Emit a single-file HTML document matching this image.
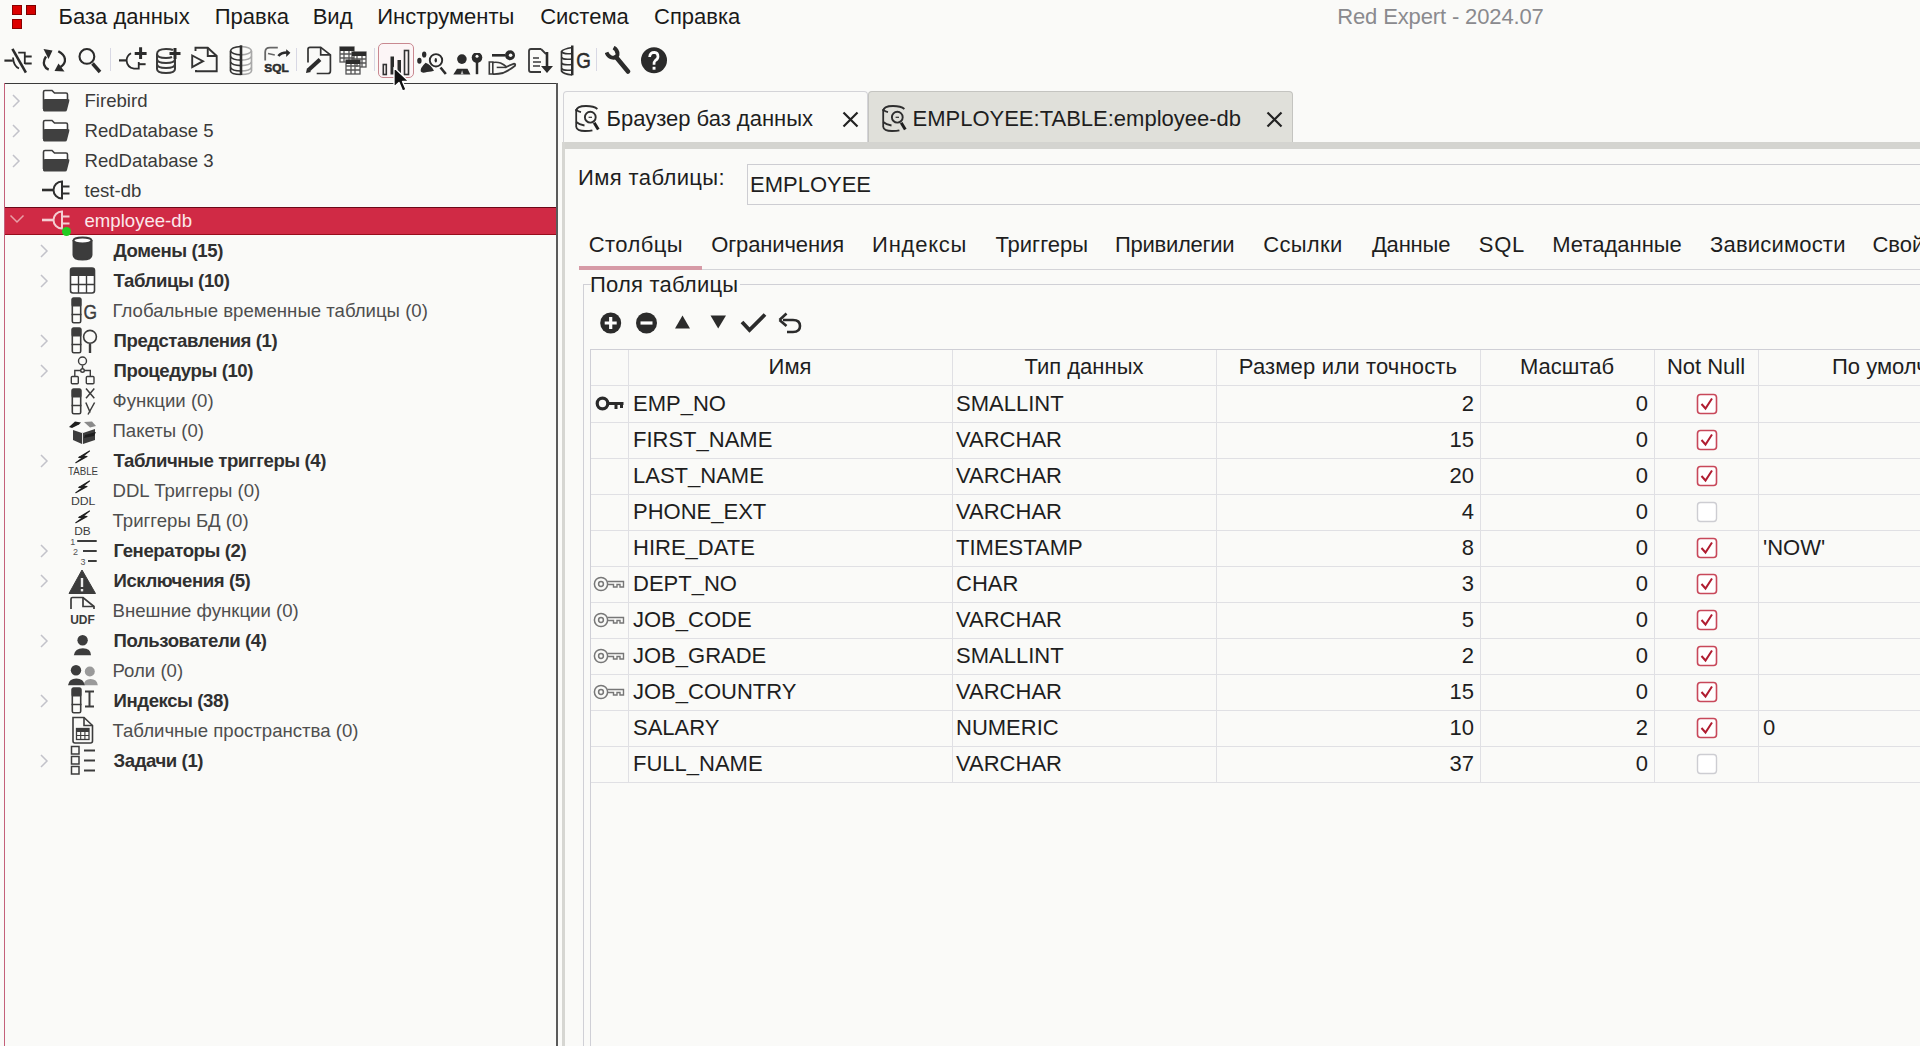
<!DOCTYPE html>
<html><head><meta charset="utf-8"><title>Red Expert</title>
<style>
html,body{margin:0;padding:0;}
body{width:1920px;height:1046px;background:#fafaf8;position:relative;overflow:hidden;font-family:"Liberation Sans", sans-serif;}
.t{position:absolute;white-space:nowrap;}
.r{position:absolute;display:block;}
</style></head><body>
<div class="r" style="left:12px;top:5px;width:10.2px;height:9.9px;background:#dc0000;box-shadow:inset 0 0 0 1px #8a0000"></div>
<div class="r" style="left:25.8px;top:5px;width:10.2px;height:9.9px;background:#d40000;box-shadow:inset 0 0 0 1px #7a0000"></div>
<div class="r" style="left:12px;top:18.8px;width:10.2px;height:9.8px;background:#dc0000;box-shadow:inset 0 0 0 1px #8a0000"></div>
<div class="t" style="left:58.6px;top:6px;font-size:22px;line-height:22px;color:#1a1a1a;font-weight:400;">База данных</div>
<div class="t" style="left:214.7px;top:6px;font-size:22px;line-height:22px;color:#1a1a1a;font-weight:400;">Правка</div>
<div class="t" style="left:312.7px;top:6px;font-size:22px;line-height:22px;color:#1a1a1a;font-weight:400;">Вид</div>
<div class="t" style="left:377.2px;top:6px;font-size:22px;line-height:22px;color:#1a1a1a;font-weight:400;">Инструменты</div>
<div class="t" style="left:540.2px;top:6px;font-size:22px;line-height:22px;color:#1a1a1a;font-weight:400;">Система</div>
<div class="t" style="left:654px;top:6px;font-size:22px;line-height:22px;color:#1a1a1a;font-weight:400;">Справка</div>
<div class="t" style="left:1337.2px;top:6px;font-size:22px;line-height:22px;color:#8a8a8e;font-weight:400;letter-spacing:-0.13px">Red Expert - 2024.07</div>
<div class="r" style="left:378px;top:43px;width:35.5px;height:34.5px;border:1.6px solid #c98890;border-radius:5px;box-sizing:border-box;background:#fcf5f6"></div>
<svg class="r" style="left:4px;top:47px" width="30" height="28" viewBox="0 0 30 28"><g stroke="#2b2b2b" fill="none"><path d="M0.4 13.6H8.8" stroke-width="2.2"/><path d="M9 10.5Q9.5 19 15 21.5" stroke-width="1.8"/><path d="M14.2 5.6H20.8V17" stroke-width="1.8"/><path d="M20.8 9.6H27.7M20.8 16.5H27.7" stroke-width="2"/><path d="M8.4 1.9L21.9 25.6" stroke-width="2.6"/></g></svg>
<svg class="r" style="left:42px;top:48px" width="24" height="26" viewBox="0 0 24 26"><g stroke="#2b2b2b" stroke-width="2.3" fill="none"><path d="M4 8.5Q1 13 2.2 17Q3.5 20.5 6.7 21.7"/><path d="M16.3 3.3Q23 7 23 12Q23 16 18.5 19"/></g><path d="M1.5 1L10.5 2.5L6.5 11Z" fill="#2b2b2b"/><path d="M12.5 23L22.5 23.5L16.5 15.5Z" fill="#2b2b2b"/></svg>
<svg class="r" style="left:78px;top:47px" width="25" height="27" viewBox="0 0 25 27"><g stroke="#2b2b2b" fill="none"><circle cx="8.9" cy="9.4" r="7.4" stroke-width="2.1"/><path d="M14.5 16.5L22 25" stroke-width="3.5"/></g></svg>
<div class="r" style="left:110px;top:48px;width:1px;height:23px;background:#d8d8e4"></div>
<svg class="r" style="left:117px;top:46px" width="30" height="26" viewBox="0 0 30 26"><g stroke="#2b2b2b" fill="none"><path d="M2 14.4H9.3" stroke-width="2.2"/><path d="M14 7.3Q9.6 10 9.6 14.5Q10 21.5 17 22.6H21.75V16" stroke-width="1.8"/><path d="M21.75 18.2H28.6" stroke-width="2"/><path d="M23.6 1.3V12.9M17.7 7.6H29.6" stroke-width="3"/></g></svg>
<svg class="r" style="left:155px;top:46px" width="26" height="28" viewBox="0 0 26 28"><g stroke="#3a3a3a" fill="none" stroke-width="2"><path d="M2 8Q2 3 11 3Q16 3 18 4"/><path d="M2 8V23Q2 27 11 27Q20 27 20 23V12"/><path d="M2 13Q2 17 11 17Q20 17 20 13"/><path d="M2 18Q2 22 11 22Q20 22 20 18"/><path d="M2 8Q2 12 11 12Q15 12 17 11"/></g><path d="M20 2V13M14.5 7.5H25.5" stroke="#2b2b2b" stroke-width="3"/></svg>
<svg class="r" style="left:190px;top:46px" width="30" height="28" viewBox="0 0 30 28"><g stroke="#333" fill="none" stroke-width="1.9"><path d="M5.5 5V1.7H17.75L26.7 10V25.3H6V24"/><path d="M17.75 1.7V10H26.7"/><path d="M2.2 9.5V21.1L13 15.2Z"/></g></svg>
<svg class="r" style="left:229px;top:45px" width="25" height="31" viewBox="0 0 25 31"><g fill="none" stroke-width="1.7"><g stroke="#333"><path d="M12 1.5Q2 2 1.5 6V26Q2 29.5 12 29.5"/><path d="M1.5 6Q3 9.5 12 9.8M1.5 11.5Q3 15 12 15.2M1.5 17Q3 20.5 12 20.6M1.5 22.5Q3 26 12 26"/></g><g stroke="#a8a8a8"><path d="M12 1.5Q22 2 22.5 6V26Q22 29.5 12 29.5"/><path d="M22.5 6Q21 9.5 12 9.8M22.5 11.5Q21 15 12 15.2M22.5 17Q21 20.5 12 20.6M22.5 22.5Q21 26 12 26"/></g></g><path d="M12 0.3V30" stroke="#2b2b2b" stroke-width="2.6"/></svg>
<svg class="r" style="left:263px;top:46px" width="30" height="28" viewBox="0 0 30 28"><g stroke="#666" fill="none"><path d="M2.2 14.6V6Q2.2 1.7 7 1.7H14.8" stroke-width="1.8"/><path d="M5 7.4L11.8 8.9" stroke-width="1.5"/></g><path d="M15.4 10Q18 6.5 24 6.5" stroke="#2b2b2b" stroke-width="2.6" fill="none"/><path d="M23.2 3.2L27.4 6.8L23.2 11Z" fill="#2b2b2b"/><text x="1.3" y="26" font-family="Liberation Sans" font-weight="700" font-size="11.5" fill="#2b2b2b" stroke="#2b2b2b" stroke-width="0.5" textLength="24.5" lengthAdjust="spacingAndGlyphs">SQL</text></svg>
<div class="r" style="left:296px;top:48px;width:1px;height:23px;background:#d8d8e4"></div>
<svg class="r" style="left:305px;top:46px" width="28" height="29" viewBox="0 0 28 29"><g stroke="#333" fill="none" stroke-width="1.7"><path d="M3 16.4V3.3Q3 1.3 5 1.3H15.7L25.4 8.8V25Q25.4 27.5 23 27.5H11.7"/><path d="M15.7 1.3V8.8H25.4"/></g><path d="M3.5 24L15 13.5" stroke="#2b2b2b" stroke-width="4"/><path d="M1 27L2 22L6 26Z" fill="#2b2b2b"/></svg>
<svg class="r" style="left:339px;top:45px" width="29" height="30" viewBox="0 0 29 30"><g fill="none" stroke="#555" stroke-width="1.3"><rect x="1" y="2" width="14" height="15"/><rect x="13" y="7" width="14" height="15"/><rect x="7" y="15" width="14" height="14" fill="#fafaf8"/><path d="M1 9H15M1 13H15M5 2V17M10 2V17M13 14H27M13 18H27M18 7V22M23 7V22M7 21H21M7 25H21M12 15V29M16 15V29"/></g><rect x="1" y="2" width="14" height="4" fill="#2b2b2b"/><rect x="13" y="7" width="14" height="4" fill="#2b2b2b"/><rect x="7" y="15" width="14" height="4" fill="#2b2b2b"/></svg>
<div class="r" style="left:374px;top:48px;width:1px;height:23px;background:#d8d8e4"></div>
<svg class="r" style="left:382px;top:49px" width="28" height="27" viewBox="0 0 28 27"><g fill="none" stroke="#333" stroke-width="1.6"><rect x="1.3" y="15.5" width="3" height="10"/><rect x="22.5" y="1.5" width="4" height="24"/></g><rect x="8.5" y="7.5" width="3.5" height="18" fill="#2b2b2b"/><rect x="15.5" y="11" width="3.5" height="14.5" fill="#2b2b2b"/></svg>
<svg class="r" style="left:417px;top:51px" width="31" height="25" viewBox="0 0 31 25"><ellipse cx="7.2" cy="3.5" rx="2.2" ry="3.1" fill="#2b2b2b"/><ellipse cx="2.4" cy="9.75" rx="2.2" ry="2.9" fill="#2b2b2b"/><path d="M8.6 11.8Q3 17 3.8 20.5Q5 22.5 10 21Q15 20.5 17 19.75Q14 14 8.6 11.8Z" fill="#2b2b2b"/><circle cx="19" cy="9.3" r="6.2" fill="#fafaf8" stroke="#2b2b2b" stroke-width="1.9"/><ellipse cx="18.8" cy="9.3" rx="1.2" ry="2.3" fill="#2b2b2b"/><path d="M23.5 16.5L28.8 23" stroke="#2b2b2b" stroke-width="2.6"/></svg>
<svg class="r" style="left:452px;top:53px" width="32" height="23" viewBox="0 0 32 23"><circle cx="9.9" cy="6.1" r="4.8" fill="#2b2b2b"/><path d="M1.3 21.5L5 15.7H15.5L18.4 21.5Z" fill="#2b2b2b"/><path d="M8.6 21.5L10.1 17.2L11.6 21.5Z" fill="#bbb"/><circle cx="25" cy="4.6" r="5.3" fill="#2b2b2b"/><path d="M25 8V21.2" stroke="#2b2b2b" stroke-width="2.5"/><circle cx="25" cy="3.3" r="1.5" fill="#fafaf8"/></svg>
<svg class="r" style="left:488px;top:49px" width="30" height="27" viewBox="0 0 30 27"><path d="M4 6.3H17" stroke="#2b2b2b" stroke-width="2.6"/><circle cx="22" cy="6.3" r="5" fill="#2b2b2b"/><circle cx="22.6" cy="6.3" r="1.8" fill="#fafaf8"/><g fill="none" stroke="#3a3a3a"><path d="M1.3 13V25H4.8V13Z" stroke-width="1.6"/><path d="M4.8 13.5Q9 12.8 12.5 14Q16 15.5 18.5 17.8" stroke-width="1.7"/><path d="M8.7 18.4H18.5" stroke-width="1.5"/><path d="M17 18.5Q22 16 25.5 14.8Q27.8 14.5 27 16.8Q22 21 15 24Q10 25.2 4.8 25" stroke-width="1.8"/></g></svg>
<svg class="r" style="left:527px;top:47px" width="26" height="27" viewBox="0 0 26 27"><g fill="none" stroke="#3a3a3a" stroke-width="1.8"><path d="M14 2H4Q2 2 2 4V23Q2 25 4 25H14"/><path d="M14 2L19 7"/><path d="M6 11H12M6 15H14M6 19H13" stroke-width="1.5"/></g><path d="M20 5V22" stroke="#2b2b2b" stroke-width="2.6"/><path d="M14 19L20 26L26 19Z" fill="#2b2b2b"/></svg>
<svg class="r" style="left:560px;top:45px" width="32" height="31" viewBox="0 0 32 31"><g fill="none" stroke="#333" stroke-width="1.7"><path d="M12.25 2.5Q3 4 1.5 6.5V26Q3 29 12.25 30"/><path d="M1.5 6.5Q3 9.5 12.25 8.5M1.5 12.5Q3 15 12.25 14M1.5 18Q3 20.5 12.25 19.5M1.5 23.5Q3 26 12.25 25"/></g><path d="M12.25 0.5V30.2" stroke="#2b2b2b" stroke-width="2.5"/><text x="16.2" y="23" textLength="14.6" lengthAdjust="spacingAndGlyphs" font-family="Liberation Sans" font-size="21.5" fill="#2b2b2b" stroke="#2b2b2b" stroke-width="0.5">G</text></svg>
<div class="r" style="left:596px;top:48px;width:1px;height:23px;background:#d8d8e4"></div>
<svg class="r" style="left:605px;top:46px" width="26" height="28" viewBox="0 0 26 28"><path d="M8.6 1.5Q13 4 12.5 9Q11 12.5 6.5 11.5Q3 10.5 1.5 6.5" stroke="#2b2b2b" stroke-width="3.8" fill="none"/><path d="M11 11L23 25.5" stroke="#2b2b2b" stroke-width="4.5" stroke-linecap="round"/></svg>
<svg class="r" style="left:640px;top:47px" width="28" height="28" viewBox="0 0 28 28"><circle cx="14" cy="13.3" r="13" fill="#2b2b2b"/><path d="M9.6 10Q10 5.4 14.5 5.4Q18 5.7 18 9.5Q18 12 15.3 13.5Q14 14.5 14 17.8" stroke="#fff" stroke-width="2.7" fill="none"/><rect x="12.6" y="19.8" width="2.9" height="2.9" fill="#fff"/></svg>
<div class="r" style="left:4px;top:83px;width:553px;height:1px;background:#3a3a3a"></div>
<div class="r" style="left:556px;top:83px;width:1.5px;height:963px;background:#5a5a5a"></div>
<div class="r" style="left:3.5px;top:83px;width:1.5px;height:963px;background:#c4607a"></div>
<div class="r" style="left:5px;top:207px;width:551px;height:28px;background:#d02a45;border-top:1px solid #6a0818;border-bottom:1px solid #980c1c;box-sizing:border-box"></div>
<svg class="r" style="left:11px;top:94px" width="10" height="14" viewBox="0 0 10 14"><path d="M2 1L8 7L2 13" stroke="#c2c2ca" stroke-width="1.5" fill="none"/></svg>
<svg class="r" style="left:42px;top:89px" width="28" height="23" viewBox="0 0 28 23"><path d="M1.5 20V3Q1.5 1.5 3 1.5H10L12.5 4H24Q25.5 4 25.5 5.5V10" stroke="#3c3c3c" stroke-width="1.6" fill="#fff"/><path d="M1 21.5V12Q1 10 3 10H26Q28 10 27.3 12L25 21Q24.7 22.5 23 22.5H2Z" fill="#404040"/></svg>
<div class="t" style="left:84.5px;top:91.5px;font-size:18.6px;line-height:18.6px;color:#3a3a3a;font-weight:400;">Firebird</div>
<svg class="r" style="left:11px;top:124px" width="10" height="14" viewBox="0 0 10 14"><path d="M2 1L8 7L2 13" stroke="#c2c2ca" stroke-width="1.5" fill="none"/></svg>
<svg class="r" style="left:42px;top:119px" width="28" height="23" viewBox="0 0 28 23"><path d="M1.5 20V3Q1.5 1.5 3 1.5H10L12.5 4H24Q25.5 4 25.5 5.5V10" stroke="#3c3c3c" stroke-width="1.6" fill="#fff"/><path d="M1 21.5V12Q1 10 3 10H26Q28 10 27.3 12L25 21Q24.7 22.5 23 22.5H2Z" fill="#404040"/></svg>
<div class="t" style="left:84.5px;top:121.5px;font-size:18.6px;line-height:18.6px;color:#3a3a3a;font-weight:400;">RedDatabase 5</div>
<svg class="r" style="left:11px;top:154px" width="10" height="14" viewBox="0 0 10 14"><path d="M2 1L8 7L2 13" stroke="#c2c2ca" stroke-width="1.5" fill="none"/></svg>
<svg class="r" style="left:42px;top:149px" width="28" height="23" viewBox="0 0 28 23"><path d="M1.5 20V3Q1.5 1.5 3 1.5H10L12.5 4H24Q25.5 4 25.5 5.5V10" stroke="#3c3c3c" stroke-width="1.6" fill="#fff"/><path d="M1 21.5V12Q1 10 3 10H26Q28 10 27.3 12L25 21Q24.7 22.5 23 22.5H2Z" fill="#404040"/></svg>
<div class="t" style="left:84.5px;top:151.5px;font-size:18.6px;line-height:18.6px;color:#3a3a3a;font-weight:400;">RedDatabase 3</div>
<svg class="r" style="left:41px;top:180px" width="30" height="21" viewBox="0 0 30 21"><g stroke="#2e2e2e" stroke-width="2" fill="none"><path d="M1 10H12" stroke-width="2.6"/><path d="M21 1.5A8.5 8.5 0 0 0 21 18.5Z"/><path d="M21 6.5H28.5M21 13.5H28.5" stroke-width="2.2"/></g></svg>
<div class="t" style="left:84.5px;top:181.5px;font-size:18.6px;line-height:18.6px;color:#3a3a3a;font-weight:400;">test-db</div>
<svg class="r" style="left:9px;top:214px" width="16" height="10" viewBox="0 0 16 10"><path d="M1.5 1.5L8 8L14.5 1.5" stroke="#e8a0a8" stroke-width="1.5" fill="none"/></svg>
<svg class="r" style="left:41px;top:210px" width="30" height="21" viewBox="0 0 30 21"><g stroke="#f4d0d4" stroke-width="2" fill="none"><path d="M1 10H12" stroke-width="2.6"/><path d="M21 1.5A8.5 8.5 0 0 0 21 18.5Z"/><path d="M21 6.5H28.5M21 13.5H28.5" stroke-width="2.2"/></g></svg>
<div class="r" style="left:62px;top:226.5px;width:9px;height:9px;background:#22cc22;border-radius:50%"></div>
<div class="t" style="left:84.5px;top:211.5px;font-size:18.6px;line-height:18.6px;color:#fbe8ea;font-weight:400;">employee-db</div>
<svg class="r" style="left:39px;top:244px" width="10" height="14" viewBox="0 0 10 14"><path d="M2 1L8 7L2 13" stroke="#c2c2ca" stroke-width="1.5" fill="none"/></svg>
<svg class="r" style="left:70px;top:235px" width="26" height="30" viewBox="0 0 26 30"><path d="M3.5 6V20Q3.5 24.5 12.5 24.5Q21.5 24.5 21.5 20V6Z" fill="#3c3c3c" stroke="#3c3c3c" stroke-width="2"/><ellipse cx="12.5" cy="5.5" rx="9" ry="3" fill="#fff" stroke="#3c3c3c" stroke-width="2"/></svg>
<div class="t" style="left:113.5px;top:241.5px;font-size:18.6px;line-height:18.6px;color:#303030;font-weight:700;letter-spacing:-0.42px">Домены (15)</div>
<svg class="r" style="left:39px;top:274px" width="10" height="14" viewBox="0 0 10 14"><path d="M2 1L8 7L2 13" stroke="#c2c2ca" stroke-width="1.5" fill="none"/></svg>
<svg class="r" style="left:69px;top:265px" width="28" height="30" viewBox="0 0 28 30"><rect x="1.5" y="3" width="24" height="25" rx="2.5" fill="#fff" stroke="#3c3c3c" stroke-width="1.6"/><path d="M1.5 5.5Q1.5 3 4 3H23Q25.5 3 25.5 5.5V11H1.5Z" fill="#3c3c3c"/><path d="M1.5 19.5H25.5M9.5 11V28M17.5 11V28" stroke="#3c3c3c" stroke-width="1.4"/></svg>
<div class="t" style="left:113.5px;top:271.5px;font-size:18.6px;line-height:18.6px;color:#303030;font-weight:700;letter-spacing:-0.42px">Таблицы (10)</div>
<svg class="r" style="left:70px;top:295px" width="30" height="30" viewBox="0 0 30 30"><rect x="2.3" y="3.3" width="8.4" height="24.4" rx="1.5" fill="none" stroke="#3c3c3c" stroke-width="1.6"/><rect x="1.5" y="2.5" width="10" height="9" rx="1.5" fill="#3c3c3c"/><path d="M1.5 19.5H11.5" stroke="#3c3c3c" stroke-width="1.5"/><text x="13.6" y="24" textLength="13.5" lengthAdjust="spacingAndGlyphs" font-family="Liberation Sans" font-size="21" fill="#3c3c3c" stroke="#3c3c3c" stroke-width="0.4">G</text></svg>
<div class="t" style="left:112.5px;top:301.5px;font-size:18.6px;line-height:18.6px;color:#4e4e4e;font-weight:400;">Глобальные временные таблицы (0)</div>
<svg class="r" style="left:39px;top:334px" width="10" height="14" viewBox="0 0 10 14"><path d="M2 1L8 7L2 13" stroke="#c2c2ca" stroke-width="1.5" fill="none"/></svg>
<svg class="r" style="left:70px;top:325px" width="30" height="30" viewBox="0 0 30 30"><rect x="2.3" y="3.3" width="8.4" height="24.4" rx="1.5" fill="none" stroke="#3c3c3c" stroke-width="1.6"/><rect x="1.5" y="2.5" width="10" height="9" rx="1.5" fill="#3c3c3c"/><path d="M1.5 19.5H11.5" stroke="#3c3c3c" stroke-width="1.5"/><circle cx="20" cy="11.8" r="6.4" fill="none" stroke="#3c3c3c" stroke-width="1.6"/><path d="M20 19V28" stroke="#3c3c3c" stroke-width="2.4"/></svg>
<div class="t" style="left:113.5px;top:331.5px;font-size:18.6px;line-height:18.6px;color:#303030;font-weight:700;letter-spacing:-0.42px">Представления (1)</div>
<svg class="r" style="left:39px;top:364px" width="10" height="14" viewBox="0 0 10 14"><path d="M2 1L8 7L2 13" stroke="#c2c2ca" stroke-width="1.5" fill="none"/></svg>
<svg class="r" style="left:70px;top:355px" width="28" height="30" viewBox="0 0 28 30"><g fill="none" stroke="#3c3c3c" stroke-width="1.4"><circle cx="12.5" cy="6" r="4"/><circle cx="12.5" cy="15.5" r="1.8"/><path d="M12.5 10.5V13.7M10.8 15.5H4.8V21.5M14.3 15.5H20.3V21.5"/><rect x="1.3" y="21.5" width="7" height="7.2" rx="1"/><rect x="16.3" y="21.5" width="7.7" height="7.2" rx="1"/></g></svg>
<div class="t" style="left:113.5px;top:361.5px;font-size:18.6px;line-height:18.6px;color:#303030;font-weight:700;letter-spacing:-0.42px">Процедуры (10)</div>
<svg class="r" style="left:70px;top:385px" width="30" height="32" viewBox="0 0 30 32"><rect x="2.3" y="4.3" width="8.4" height="24.4" rx="1.5" fill="none" stroke="#3c3c3c" stroke-width="1.6"/><rect x="1.5" y="3.5" width="10" height="9" rx="1.5" fill="#3c3c3c"/><path d="M1.5 20.5H11.5" stroke="#3c3c3c" stroke-width="1.5"/><path d="M16 3.5L24.3 13.3M24.3 3.5L16 13.3M15.8 17.5L20.2 27.5M24.6 17.5L18 29.5" stroke="#3c3c3c" stroke-width="1.5" fill="none"/></svg>
<div class="t" style="left:112.5px;top:391.5px;font-size:18.6px;line-height:18.6px;color:#4e4e4e;font-weight:400;">Функции (0)</div>
<svg class="r" style="left:66px;top:415px" width="32" height="32" viewBox="0 0 32 32"><path d="M7 15L16 18V29L7 25Z" fill="#3c3c3c"/><path d="M17 18L29 14V25L17 29Z" fill="#3c3c3c"/><path d="M16.5 17V29" stroke="#ddd" stroke-width="1"/><path d="M3 12L9 6.5L15 7.5L13 9.5L6 13Z" fill="#1e1e1e"/><path d="M18 7L26 6.5L30 11L24 12.5Z" fill="#8a8a8a"/><path d="M19 20L30 17L28 21L18 23Z" fill="#1e1e1e"/></svg>
<div class="t" style="left:112.5px;top:421.5px;font-size:18.6px;line-height:18.6px;color:#4e4e4e;font-weight:400;">Пакеты (0)</div>
<svg class="r" style="left:39px;top:454px" width="10" height="14" viewBox="0 0 10 14"><path d="M2 1L8 7L2 13" stroke="#c2c2ca" stroke-width="1.5" fill="none"/></svg>
<svg class="r" style="left:66px;top:445px" width="34" height="32" viewBox="0 0 34 32"><path d="M23.5 6L12.8 12.4L16.8 12.8L9.8 17.8L21 11.6L17 11.1Z" fill="#1e1e1e" stroke="#1e1e1e" stroke-width="1.1" stroke-linejoin="round"/><text x="2" y="30" textLength="30" lengthAdjust="spacingAndGlyphs" font-family="Liberation Sans" font-size="10.5" fill="#3c3c3c">TABLE</text></svg>
<div class="t" style="left:113.5px;top:451.5px;font-size:18.6px;line-height:18.6px;color:#303030;font-weight:700;letter-spacing:-0.42px">Табличные триггеры (4)</div>
<svg class="r" style="left:66px;top:475px" width="34" height="32" viewBox="0 0 34 32"><path d="M23.5 6L12.8 12.4L16.8 12.8L9.8 17.8L21 11.6L17 11.1Z" fill="#1e1e1e" stroke="#1e1e1e" stroke-width="1.1" stroke-linejoin="round"/><text x="4.9" y="30" textLength="24.5" lengthAdjust="spacingAndGlyphs" font-family="Liberation Sans" font-size="11.5" fill="#3c3c3c">DDL</text></svg>
<div class="t" style="left:112.5px;top:481.5px;font-size:18.6px;line-height:18.6px;color:#4e4e4e;font-weight:400;">DDL Триггеры (0)</div>
<svg class="r" style="left:66px;top:505px" width="34" height="32" viewBox="0 0 34 32"><path d="M23.5 6L12.8 12.4L16.8 12.8L9.8 17.8L21 11.6L17 11.1Z" fill="#1e1e1e" stroke="#1e1e1e" stroke-width="1.1" stroke-linejoin="round"/><text x="8.3" y="29.5" textLength="16.5" lengthAdjust="spacingAndGlyphs" font-family="Liberation Sans" font-size="11" fill="#3c3c3c">DB</text></svg>
<div class="t" style="left:112.5px;top:511.5px;font-size:18.6px;line-height:18.6px;color:#4e4e4e;font-weight:400;">Триггеры БД (0)</div>
<svg class="r" style="left:39px;top:544px" width="10" height="14" viewBox="0 0 10 14"><path d="M2 1L8 7L2 13" stroke="#c2c2ca" stroke-width="1.5" fill="none"/></svg>
<svg class="r" style="left:66px;top:535px" width="34" height="32" viewBox="0 0 34 32"><g font-family="Liberation Sans" font-size="9" fill="#555"><text x="4.3" y="9.6">1</text><text x="7" y="19.8">2</text><text x="14.6" y="29.8">3</text></g><path d="M11.2 6H30.7M17 16H30.7M22 26H30.7" stroke="#3c3c3c" stroke-width="2.2"/></svg>
<div class="t" style="left:113.5px;top:541.5px;font-size:18.6px;line-height:18.6px;color:#303030;font-weight:700;letter-spacing:-0.42px">Генераторы (2)</div>
<svg class="r" style="left:39px;top:574px" width="10" height="14" viewBox="0 0 10 14"><path d="M2 1L8 7L2 13" stroke="#c2c2ca" stroke-width="1.5" fill="none"/></svg>
<svg class="r" style="left:68px;top:565px" width="30" height="30" viewBox="0 0 30 30"><path d="M14 5L27.5 28.5H1Z" fill="#3c3c3c" stroke="#3c3c3c" stroke-width="1" stroke-linejoin="round"/><path d="M14 13V22" stroke="#eee" stroke-width="2.4"/><rect x="12.8" y="24" width="2.4" height="2.4" fill="#eee"/></svg>
<div class="t" style="left:113.5px;top:571.5px;font-size:18.6px;line-height:18.6px;color:#303030;font-weight:700;letter-spacing:-0.42px">Исключения (5)</div>
<svg class="r" style="left:68px;top:595px" width="30" height="32" viewBox="0 0 30 32"><path d="M3 14V4Q3 2.5 4.5 2.5H15L26 11.5V14" fill="none" stroke="#3c3c3c" stroke-width="1.7"/><path d="M15 2.5V11.5H26" fill="none" stroke="#3c3c3c" stroke-width="1.7"/><text x="14.5" y="29" text-anchor="middle" font-family="Liberation Sans" font-weight="700" font-size="12" fill="#3c3c3c">UDF</text></svg>
<div class="t" style="left:112.5px;top:601.5px;font-size:18.6px;line-height:18.6px;color:#4e4e4e;font-weight:400;">Внешние функции (0)</div>
<svg class="r" style="left:39px;top:634px" width="10" height="14" viewBox="0 0 10 14"><path d="M2 1L8 7L2 13" stroke="#c2c2ca" stroke-width="1.5" fill="none"/></svg>
<svg class="r" style="left:70px;top:625px" width="26" height="32" viewBox="0 0 26 32"><circle cx="12.6" cy="15.3" r="5.2" fill="#3c3c3c"/><path d="M3.8 30.2Q5 23.3 12.9 23.3Q20.8 23.3 21 30.2Z" fill="#3c3c3c"/></svg>
<div class="t" style="left:113.5px;top:631.5px;font-size:18.6px;line-height:18.6px;color:#303030;font-weight:700;letter-spacing:-0.42px">Пользователи (4)</div>
<svg class="r" style="left:66px;top:655px" width="34" height="32" viewBox="0 0 34 32"><circle cx="23.8" cy="16.5" r="5" fill="#9a9a9a"/><path d="M17.5 30.2Q18.5 24 24.5 24Q31 24 31.8 30.2Z" fill="#9a9a9a"/><circle cx="10" cy="15.3" r="5.2" fill="#3c3c3c"/><path d="M2 30.2Q3 23.4 10.3 23.4Q17.8 23.4 18.7 30.2Z" fill="#3c3c3c"/></svg>
<div class="t" style="left:112.5px;top:661.5px;font-size:18.6px;line-height:18.6px;color:#4e4e4e;font-weight:400;">Роли (0)</div>
<svg class="r" style="left:39px;top:694px" width="10" height="14" viewBox="0 0 10 14"><path d="M2 1L8 7L2 13" stroke="#c2c2ca" stroke-width="1.5" fill="none"/></svg>
<svg class="r" style="left:70px;top:685px" width="30" height="30" viewBox="0 0 30 30"><rect x="2.3" y="3.3" width="8.4" height="24.4" rx="1.5" fill="none" stroke="#3c3c3c" stroke-width="1.6"/><rect x="1.5" y="2.5" width="10" height="9" rx="1.5" fill="#3c3c3c"/><path d="M1.5 19.5H11.5" stroke="#3c3c3c" stroke-width="1.5"/><path d="M15 6.5H24M19.5 6.5V21.5M15 21.5H24" stroke="#3c3c3c" stroke-width="2"/></svg>
<div class="t" style="left:113.5px;top:691.5px;font-size:18.6px;line-height:18.6px;color:#303030;font-weight:700;letter-spacing:-0.42px">Индексы (38)</div>
<svg class="r" style="left:70px;top:715px" width="26" height="30" viewBox="0 0 26 30"><path d="M3 2.5H14L22.5 10.5V26Q22.5 28 20.5 28H5Q3 28 3 26Z" fill="none" stroke="#3c3c3c" stroke-width="1.6"/><path d="M14 2.5V10.5H22.5" fill="none" stroke="#3c3c3c" stroke-width="1.6"/><rect x="6.5" y="13.5" width="12.5" height="11" fill="none" stroke="#3c3c3c" stroke-width="1.3"/><rect x="6.5" y="13.5" width="12.5" height="3.5" fill="#3c3c3c"/><path d="M6.5 20.5H19M10.7 17V24.5M14.9 17V24.5" stroke="#3c3c3c" stroke-width="1.1"/></svg>
<div class="t" style="left:112.5px;top:721.5px;font-size:18.6px;line-height:18.6px;color:#4e4e4e;font-weight:400;">Табличные пространства (0)</div>
<svg class="r" style="left:39px;top:754px" width="10" height="14" viewBox="0 0 10 14"><path d="M2 1L8 7L2 13" stroke="#c2c2ca" stroke-width="1.5" fill="none"/></svg>
<svg class="r" style="left:70px;top:745px" width="28" height="32" viewBox="0 0 28 32"><g fill="none" stroke="#3c3c3c" stroke-width="1.5"><rect x="1.5" y="1.5" width="7.5" height="7.5"/><rect x="1.5" y="11.5" width="7.5" height="7.5"/><rect x="1.5" y="21.5" width="7.5" height="7.5"/></g><path d="M14 5.5H25M14 15.5H25M14 25.5H25" stroke="#3c3c3c" stroke-width="2"/></svg>
<div class="t" style="left:113.5px;top:751.5px;font-size:18.6px;line-height:18.6px;color:#303030;font-weight:700;letter-spacing:-0.42px">Задачи (1)</div>
<div class="r" style="left:563px;top:91px;width:305px;height:52px;border:1px solid #d4d4d8;border-bottom:none;border-radius:4px 4px 0 0;box-sizing:border-box;background:#fafaf8"></div>
<div class="r" style="left:868px;top:91px;width:425px;height:52px;border:1px solid #c4c4c0;border-bottom:none;border-radius:4px 4px 0 0;box-sizing:border-box;background:#e0e0da"></div>
<div class="r" style="left:563px;top:141.5px;width:1357px;height:7.5px;background:#d4d4d0"></div>
<div class="r" style="left:562px;top:141.5px;width:2.5px;height:905px;background:#d6d6d2"></div>
<svg class="r" style="left:573px;top:104px" width="28" height="30" viewBox="0 0 28 30"><g fill="none" stroke="#2e2e2e" stroke-width="1.8"><path d="M3.2 7Q3.5 2 13 2Q21 2 24.4 5"/><path d="M3.2 5V23"/><path d="M3.2 23Q4 27 12 27Q17 27 19.4 26.3"/><path d="M3.2 5.6Q5 7.5 8 8.2M3.2 18Q6 20.5 11.5 21.5"/><circle cx="17.3" cy="13.2" r="5.4" stroke-width="1.9"/><path d="M15.6 13.3H19" stroke-width="1.2"/></g><path d="M21.2 18.8L25.3 25.5" stroke="#1e1e1e" stroke-width="3"/></svg>
<div class="t" style="left:606.5px;top:108px;font-size:22px;line-height:22px;color:#1e1e1e;font-weight:400;">Браузер баз данных</div>
<svg class="r" style="left:841.5px;top:110.5px" width="17" height="17" viewBox="0 0 17 17"><path d="M1.5 1.5L15.5 15.5M15.5 1.5L1.5 15.5" stroke="#222" stroke-width="2.2"/></svg>
<svg class="r" style="left:880px;top:104px" width="28" height="30" viewBox="0 0 28 30"><g fill="none" stroke="#2e2e2e" stroke-width="1.8"><path d="M3.2 7Q3.5 2 13 2Q21 2 24.4 5"/><path d="M3.2 5V23"/><path d="M3.2 23Q4 27 12 27Q17 27 19.4 26.3"/><path d="M3.2 5.6Q5 7.5 8 8.2M3.2 18Q6 20.5 11.5 21.5"/><circle cx="17.3" cy="13.2" r="5.4" stroke-width="1.9"/><path d="M15.6 13.3H19" stroke-width="1.2"/></g><path d="M21.2 18.8L25.3 25.5" stroke="#1e1e1e" stroke-width="3"/></svg>
<div class="t" style="left:912.5px;top:108px;font-size:22px;line-height:22px;color:#1e1e1e;font-weight:400;">EMPLOYEE:TABLE:employee-db</div>
<svg class="r" style="left:1266px;top:110.5px" width="17" height="17" viewBox="0 0 17 17"><path d="M1.5 1.5L15.5 15.5M15.5 1.5L1.5 15.5" stroke="#222" stroke-width="2.2"/></svg>
<div class="t" style="left:578px;top:166.5px;font-size:22px;line-height:22px;color:#1e1e1e;font-weight:400;letter-spacing:0.4px">Имя таблицы:</div>
<div class="r" style="left:747px;top:164px;width:1173px;height:41px;border:1px solid #cdcdd2;border-right:none;box-sizing:border-box;background:#fafaf8"></div>
<div class="t" style="left:750px;top:173.5px;font-size:22px;line-height:22px;color:#1e1e1e;font-weight:400;">EMPLOYEE</div>
<div class="t" style="left:588.7px;top:234px;font-size:22px;line-height:22px;color:#1e1e1e;font-weight:400;letter-spacing:0.42px">Столбцы</div>
<div class="t" style="left:711.2px;top:234px;font-size:22px;line-height:22px;color:#1e1e1e;font-weight:400;letter-spacing:-0.12px">Ограничения</div>
<div class="t" style="left:872.1px;top:234px;font-size:22px;line-height:22px;color:#1e1e1e;font-weight:400;letter-spacing:0.77px">Индексы</div>
<div class="t" style="left:995.4px;top:234px;font-size:22px;line-height:22px;color:#1e1e1e;font-weight:400;letter-spacing:0px">Триггеры</div>
<div class="t" style="left:1115px;top:234px;font-size:22px;line-height:22px;color:#1e1e1e;font-weight:400;letter-spacing:-0.27px">Привилегии</div>
<div class="t" style="left:1263.2px;top:234px;font-size:22px;line-height:22px;color:#1e1e1e;font-weight:400;letter-spacing:0.32px">Ссылки</div>
<div class="t" style="left:1371.9px;top:234px;font-size:22px;line-height:22px;color:#1e1e1e;font-weight:400;letter-spacing:-0.2px">Данные</div>
<div class="t" style="left:1478.8px;top:234px;font-size:22px;line-height:22px;color:#1e1e1e;font-weight:400;letter-spacing:0.7px">SQL</div>
<div class="t" style="left:1552.3px;top:234px;font-size:22px;line-height:22px;color:#1e1e1e;font-weight:400;letter-spacing:0px">Метаданные</div>
<div class="t" style="left:1710px;top:234px;font-size:22px;line-height:22px;color:#1e1e1e;font-weight:400;letter-spacing:0.19px">Зависимости</div>
<div class="t" style="left:1872.4px;top:234px;font-size:22px;line-height:22px;color:#1e1e1e;font-weight:400;letter-spacing:0px">Свойства</div>
<div class="r" style="left:579px;top:266px;width:123px;height:3.5px;background:#d69aa6"></div>
<div class="r" style="left:702px;top:268.5px;width:1218px;height:1px;background:#d4d4d8"></div>
<div class="r" style="left:583px;top:284px;width:8px;height:1px;background:#d0d0d6"></div>
<div class="r" style="left:740px;top:284px;width:1180px;height:1px;background:#d0d0d6"></div>
<div class="r" style="left:582.5px;top:284px;width:1px;height:762px;background:#d0d0d6"></div>
<div class="t" style="left:590px;top:273.5px;font-size:22px;line-height:22px;color:#1e1e1e;font-weight:400;letter-spacing:0.22px">Поля таблицы</div>
<svg class="r" style="left:599px;top:311px" width="24" height="24" viewBox="0 0 24 24"><circle cx="11.7" cy="12" r="10.5" fill="#2b2b2b"/><path d="M11.7 6V18M5.7 12H17.7" stroke="#fff" stroke-width="3.2"/></svg>
<svg class="r" style="left:635px;top:311px" width="24" height="24" viewBox="0 0 24 24"><circle cx="11.5" cy="12" r="10.5" fill="#2b2b2b"/><path d="M5.5 12H17.5" stroke="#fff" stroke-width="3.2"/></svg>
<svg class="r" style="left:674px;top:314px" width="18" height="16" viewBox="0 0 18 16"><path d="M8.5 1.5L16 14.5H1Z" fill="#2b2b2b"/></svg>
<svg class="r" style="left:709px;top:314px" width="19" height="16" viewBox="0 0 19 16"><path d="M1.5 1.5H17L9.2 14.5Z" fill="#2b2b2b"/></svg>
<svg class="r" style="left:739px;top:311px" width="30" height="24" viewBox="0 0 30 24"><path d="M3 11L10.5 19L26 3.5" stroke="#2b2b2b" stroke-width="3.8" fill="none"/></svg>
<svg class="r" style="left:777px;top:310px" width="28" height="26" viewBox="0 0 28 26"><path d="M6 10H16Q23 10 23 16Q23 22 16 22H10" stroke="#2b2b2b" stroke-width="2.6" fill="none"/><path d="M2.5 10L9.5 3.5M2.5 10L9.5 16" stroke="#2b2b2b" stroke-width="2.6" fill="none"/></svg>
<div class="r" style="left:590px;top:349px;width:1330px;height:1.3px;background:#cfcfd6"></div>
<div class="r" style="left:589.5px;top:349px;width:1.3px;height:697px;background:#cfcfd6"></div>
<div class="r" style="left:591px;top:385px;width:1329px;height:1px;background:#e0e0e4"></div>
<div class="r" style="left:591px;top:422px;width:1329px;height:1px;background:#e0e0e4"></div>
<div class="r" style="left:591px;top:458px;width:1329px;height:1px;background:#e0e0e4"></div>
<div class="r" style="left:591px;top:494px;width:1329px;height:1px;background:#e0e0e4"></div>
<div class="r" style="left:591px;top:530px;width:1329px;height:1px;background:#e0e0e4"></div>
<div class="r" style="left:591px;top:566px;width:1329px;height:1px;background:#e0e0e4"></div>
<div class="r" style="left:591px;top:602px;width:1329px;height:1px;background:#e0e0e4"></div>
<div class="r" style="left:591px;top:638px;width:1329px;height:1px;background:#e0e0e4"></div>
<div class="r" style="left:591px;top:674px;width:1329px;height:1px;background:#e0e0e4"></div>
<div class="r" style="left:591px;top:710px;width:1329px;height:1px;background:#e0e0e4"></div>
<div class="r" style="left:591px;top:746px;width:1329px;height:1px;background:#e0e0e4"></div>
<div class="r" style="left:591px;top:782px;width:1329px;height:1px;background:#e0e0e4"></div>
<div class="r" style="left:628px;top:350px;width:1px;height:432px;background:#e0e0e4"></div>
<div class="r" style="left:952px;top:350px;width:1px;height:432px;background:#e0e0e4"></div>
<div class="r" style="left:1216px;top:350px;width:1px;height:432px;background:#e0e0e4"></div>
<div class="r" style="left:1480px;top:350px;width:1px;height:432px;background:#e0e0e4"></div>
<div class="r" style="left:1654px;top:350px;width:1px;height:432px;background:#e0e0e4"></div>
<div class="r" style="left:1758px;top:350px;width:1px;height:432px;background:#e0e0e4"></div>
<div class="t" style="left:590px;width:400px;text-align:center;top:356px;font-size:22px;line-height:22px;color:#1e1e1e;letter-spacing:0px">Имя</div>
<div class="t" style="left:884px;width:400px;text-align:center;top:356px;font-size:22px;line-height:22px;color:#1e1e1e;letter-spacing:0px">Тип данных</div>
<div class="t" style="left:1148px;width:400px;text-align:center;top:356px;font-size:22px;line-height:22px;color:#1e1e1e;letter-spacing:0.17px">Размер или точность</div>
<div class="t" style="left:1367px;width:400px;text-align:center;top:356px;font-size:22px;line-height:22px;color:#1e1e1e;letter-spacing:0px">Масштаб</div>
<div class="t" style="left:1506px;width:400px;text-align:center;top:356px;font-size:22px;line-height:22px;color:#1e1e1e;letter-spacing:0px">Not Null</div>
<div class="t" style="left:1832px;top:356px;font-size:22px;line-height:22px;color:#1e1e1e;font-weight:400;">По умолчанию</div>
<svg class="r" style="left:594.5px;top:396px" width="30" height="16" viewBox="0 0 30 16"><circle cx="7.5" cy="7.5" r="5.3" fill="none" stroke="#2a2a2a" stroke-width="3.2"/><path d="M12 7.5H28.5M21 7.5V13M26.5 7.5V12" stroke="#2a2a2a" stroke-width="3"/></svg>
<div class="t" style="left:633px;top:393px;font-size:22px;line-height:22px;color:#1e1e1e;font-weight:400;">EMP_NO</div>
<div class="t" style="left:956px;top:393px;font-size:22px;line-height:22px;color:#1e1e1e;font-weight:400;">SMALLINT</div>
<div class="t" style="left:1274px;width:200px;text-align:right;top:393px;font-size:22px;line-height:22px;color:#1e1e1e">2</div>
<div class="t" style="left:1448px;width:200px;text-align:right;top:393px;font-size:22px;line-height:22px;color:#1e1e1e">0</div>
<svg class="r" style="left:1696px;top:393px" width="22" height="22" viewBox="0 0 22 22"><rect x="1.5" y="1.5" width="19" height="19" rx="3" fill="#fff" stroke="#c8485a" stroke-width="1.6"/><path d="M5.5 11L9.5 15.5L16 5.5" stroke="#b01c30" stroke-width="2" fill="none"/></svg>
<div class="t" style="left:633px;top:429px;font-size:22px;line-height:22px;color:#1e1e1e;font-weight:400;">FIRST_NAME</div>
<div class="t" style="left:956px;top:429px;font-size:22px;line-height:22px;color:#1e1e1e;font-weight:400;">VARCHAR</div>
<div class="t" style="left:1274px;width:200px;text-align:right;top:429px;font-size:22px;line-height:22px;color:#1e1e1e">15</div>
<div class="t" style="left:1448px;width:200px;text-align:right;top:429px;font-size:22px;line-height:22px;color:#1e1e1e">0</div>
<svg class="r" style="left:1696px;top:429px" width="22" height="22" viewBox="0 0 22 22"><rect x="1.5" y="1.5" width="19" height="19" rx="3" fill="#fff" stroke="#c8485a" stroke-width="1.6"/><path d="M5.5 11L9.5 15.5L16 5.5" stroke="#b01c30" stroke-width="2" fill="none"/></svg>
<div class="t" style="left:633px;top:465px;font-size:22px;line-height:22px;color:#1e1e1e;font-weight:400;">LAST_NAME</div>
<div class="t" style="left:956px;top:465px;font-size:22px;line-height:22px;color:#1e1e1e;font-weight:400;">VARCHAR</div>
<div class="t" style="left:1274px;width:200px;text-align:right;top:465px;font-size:22px;line-height:22px;color:#1e1e1e">20</div>
<div class="t" style="left:1448px;width:200px;text-align:right;top:465px;font-size:22px;line-height:22px;color:#1e1e1e">0</div>
<svg class="r" style="left:1696px;top:465px" width="22" height="22" viewBox="0 0 22 22"><rect x="1.5" y="1.5" width="19" height="19" rx="3" fill="#fff" stroke="#c8485a" stroke-width="1.6"/><path d="M5.5 11L9.5 15.5L16 5.5" stroke="#b01c30" stroke-width="2" fill="none"/></svg>
<div class="t" style="left:633px;top:501px;font-size:22px;line-height:22px;color:#1e1e1e;font-weight:400;">PHONE_EXT</div>
<div class="t" style="left:956px;top:501px;font-size:22px;line-height:22px;color:#1e1e1e;font-weight:400;">VARCHAR</div>
<div class="t" style="left:1274px;width:200px;text-align:right;top:501px;font-size:22px;line-height:22px;color:#1e1e1e">4</div>
<div class="t" style="left:1448px;width:200px;text-align:right;top:501px;font-size:22px;line-height:22px;color:#1e1e1e">0</div>
<svg class="r" style="left:1696px;top:501px" width="22" height="22" viewBox="0 0 22 22"><rect x="1.5" y="1.5" width="19" height="19" rx="3" fill="#fff" stroke="#cdcdd2" stroke-width="1.4"/></svg>
<div class="t" style="left:633px;top:537px;font-size:22px;line-height:22px;color:#1e1e1e;font-weight:400;">HIRE_DATE</div>
<div class="t" style="left:956px;top:537px;font-size:22px;line-height:22px;color:#1e1e1e;font-weight:400;">TIMESTAMP</div>
<div class="t" style="left:1274px;width:200px;text-align:right;top:537px;font-size:22px;line-height:22px;color:#1e1e1e">8</div>
<div class="t" style="left:1448px;width:200px;text-align:right;top:537px;font-size:22px;line-height:22px;color:#1e1e1e">0</div>
<svg class="r" style="left:1696px;top:537px" width="22" height="22" viewBox="0 0 22 22"><rect x="1.5" y="1.5" width="19" height="19" rx="3" fill="#fff" stroke="#c8485a" stroke-width="1.6"/><path d="M5.5 11L9.5 15.5L16 5.5" stroke="#b01c30" stroke-width="2" fill="none"/></svg>
<div class="t" style="left:1763px;top:537px;font-size:22px;line-height:22px;color:#1e1e1e;font-weight:400;">'NOW'</div>
<svg class="r" style="left:593px;top:575.5px" width="32" height="17" viewBox="0 0 32 17"><circle cx="8" cy="8" r="6.6" fill="none" stroke="#777" stroke-width="1.5"/><circle cx="8" cy="8" r="2.4" fill="none" stroke="#777" stroke-width="1.5"/><path d="M14.5 5.5H30.5V11H27V8.5H24V11H20.5V8.5H14.5" fill="none" stroke="#777" stroke-width="1.4"/></svg>
<div class="t" style="left:633px;top:573px;font-size:22px;line-height:22px;color:#1e1e1e;font-weight:400;">DEPT_NO</div>
<div class="t" style="left:956px;top:573px;font-size:22px;line-height:22px;color:#1e1e1e;font-weight:400;">CHAR</div>
<div class="t" style="left:1274px;width:200px;text-align:right;top:573px;font-size:22px;line-height:22px;color:#1e1e1e">3</div>
<div class="t" style="left:1448px;width:200px;text-align:right;top:573px;font-size:22px;line-height:22px;color:#1e1e1e">0</div>
<svg class="r" style="left:1696px;top:573px" width="22" height="22" viewBox="0 0 22 22"><rect x="1.5" y="1.5" width="19" height="19" rx="3" fill="#fff" stroke="#c8485a" stroke-width="1.6"/><path d="M5.5 11L9.5 15.5L16 5.5" stroke="#b01c30" stroke-width="2" fill="none"/></svg>
<svg class="r" style="left:593px;top:611.5px" width="32" height="17" viewBox="0 0 32 17"><circle cx="8" cy="8" r="6.6" fill="none" stroke="#777" stroke-width="1.5"/><circle cx="8" cy="8" r="2.4" fill="none" stroke="#777" stroke-width="1.5"/><path d="M14.5 5.5H30.5V11H27V8.5H24V11H20.5V8.5H14.5" fill="none" stroke="#777" stroke-width="1.4"/></svg>
<div class="t" style="left:633px;top:609px;font-size:22px;line-height:22px;color:#1e1e1e;font-weight:400;">JOB_CODE</div>
<div class="t" style="left:956px;top:609px;font-size:22px;line-height:22px;color:#1e1e1e;font-weight:400;">VARCHAR</div>
<div class="t" style="left:1274px;width:200px;text-align:right;top:609px;font-size:22px;line-height:22px;color:#1e1e1e">5</div>
<div class="t" style="left:1448px;width:200px;text-align:right;top:609px;font-size:22px;line-height:22px;color:#1e1e1e">0</div>
<svg class="r" style="left:1696px;top:609px" width="22" height="22" viewBox="0 0 22 22"><rect x="1.5" y="1.5" width="19" height="19" rx="3" fill="#fff" stroke="#c8485a" stroke-width="1.6"/><path d="M5.5 11L9.5 15.5L16 5.5" stroke="#b01c30" stroke-width="2" fill="none"/></svg>
<svg class="r" style="left:593px;top:647.5px" width="32" height="17" viewBox="0 0 32 17"><circle cx="8" cy="8" r="6.6" fill="none" stroke="#777" stroke-width="1.5"/><circle cx="8" cy="8" r="2.4" fill="none" stroke="#777" stroke-width="1.5"/><path d="M14.5 5.5H30.5V11H27V8.5H24V11H20.5V8.5H14.5" fill="none" stroke="#777" stroke-width="1.4"/></svg>
<div class="t" style="left:633px;top:645px;font-size:22px;line-height:22px;color:#1e1e1e;font-weight:400;">JOB_GRADE</div>
<div class="t" style="left:956px;top:645px;font-size:22px;line-height:22px;color:#1e1e1e;font-weight:400;">SMALLINT</div>
<div class="t" style="left:1274px;width:200px;text-align:right;top:645px;font-size:22px;line-height:22px;color:#1e1e1e">2</div>
<div class="t" style="left:1448px;width:200px;text-align:right;top:645px;font-size:22px;line-height:22px;color:#1e1e1e">0</div>
<svg class="r" style="left:1696px;top:645px" width="22" height="22" viewBox="0 0 22 22"><rect x="1.5" y="1.5" width="19" height="19" rx="3" fill="#fff" stroke="#c8485a" stroke-width="1.6"/><path d="M5.5 11L9.5 15.5L16 5.5" stroke="#b01c30" stroke-width="2" fill="none"/></svg>
<svg class="r" style="left:593px;top:683.5px" width="32" height="17" viewBox="0 0 32 17"><circle cx="8" cy="8" r="6.6" fill="none" stroke="#777" stroke-width="1.5"/><circle cx="8" cy="8" r="2.4" fill="none" stroke="#777" stroke-width="1.5"/><path d="M14.5 5.5H30.5V11H27V8.5H24V11H20.5V8.5H14.5" fill="none" stroke="#777" stroke-width="1.4"/></svg>
<div class="t" style="left:633px;top:681px;font-size:22px;line-height:22px;color:#1e1e1e;font-weight:400;">JOB_COUNTRY</div>
<div class="t" style="left:956px;top:681px;font-size:22px;line-height:22px;color:#1e1e1e;font-weight:400;">VARCHAR</div>
<div class="t" style="left:1274px;width:200px;text-align:right;top:681px;font-size:22px;line-height:22px;color:#1e1e1e">15</div>
<div class="t" style="left:1448px;width:200px;text-align:right;top:681px;font-size:22px;line-height:22px;color:#1e1e1e">0</div>
<svg class="r" style="left:1696px;top:681px" width="22" height="22" viewBox="0 0 22 22"><rect x="1.5" y="1.5" width="19" height="19" rx="3" fill="#fff" stroke="#c8485a" stroke-width="1.6"/><path d="M5.5 11L9.5 15.5L16 5.5" stroke="#b01c30" stroke-width="2" fill="none"/></svg>
<div class="t" style="left:633px;top:717px;font-size:22px;line-height:22px;color:#1e1e1e;font-weight:400;">SALARY</div>
<div class="t" style="left:956px;top:717px;font-size:22px;line-height:22px;color:#1e1e1e;font-weight:400;">NUMERIC</div>
<div class="t" style="left:1274px;width:200px;text-align:right;top:717px;font-size:22px;line-height:22px;color:#1e1e1e">10</div>
<div class="t" style="left:1448px;width:200px;text-align:right;top:717px;font-size:22px;line-height:22px;color:#1e1e1e">2</div>
<svg class="r" style="left:1696px;top:717px" width="22" height="22" viewBox="0 0 22 22"><rect x="1.5" y="1.5" width="19" height="19" rx="3" fill="#fff" stroke="#c8485a" stroke-width="1.6"/><path d="M5.5 11L9.5 15.5L16 5.5" stroke="#b01c30" stroke-width="2" fill="none"/></svg>
<div class="t" style="left:1763px;top:717px;font-size:22px;line-height:22px;color:#1e1e1e;font-weight:400;">0</div>
<div class="t" style="left:633px;top:753px;font-size:22px;line-height:22px;color:#1e1e1e;font-weight:400;">FULL_NAME</div>
<div class="t" style="left:956px;top:753px;font-size:22px;line-height:22px;color:#1e1e1e;font-weight:400;">VARCHAR</div>
<div class="t" style="left:1274px;width:200px;text-align:right;top:753px;font-size:22px;line-height:22px;color:#1e1e1e">37</div>
<div class="t" style="left:1448px;width:200px;text-align:right;top:753px;font-size:22px;line-height:22px;color:#1e1e1e">0</div>
<svg class="r" style="left:1696px;top:753px" width="22" height="22" viewBox="0 0 22 22"><rect x="1.5" y="1.5" width="19" height="19" rx="3" fill="#fff" stroke="#cdcdd2" stroke-width="1.4"/></svg>
<svg class="r" style="left:392px;top:66px" width="20" height="28" viewBox="0 0 20 28"><path d="M2 1.5V21L7 16.5L10.5 25L14 23.5L10.5 15.5H17Z" fill="#111" stroke="#fff" stroke-width="1.3" stroke-linejoin="round"/></svg>
</body></html>
